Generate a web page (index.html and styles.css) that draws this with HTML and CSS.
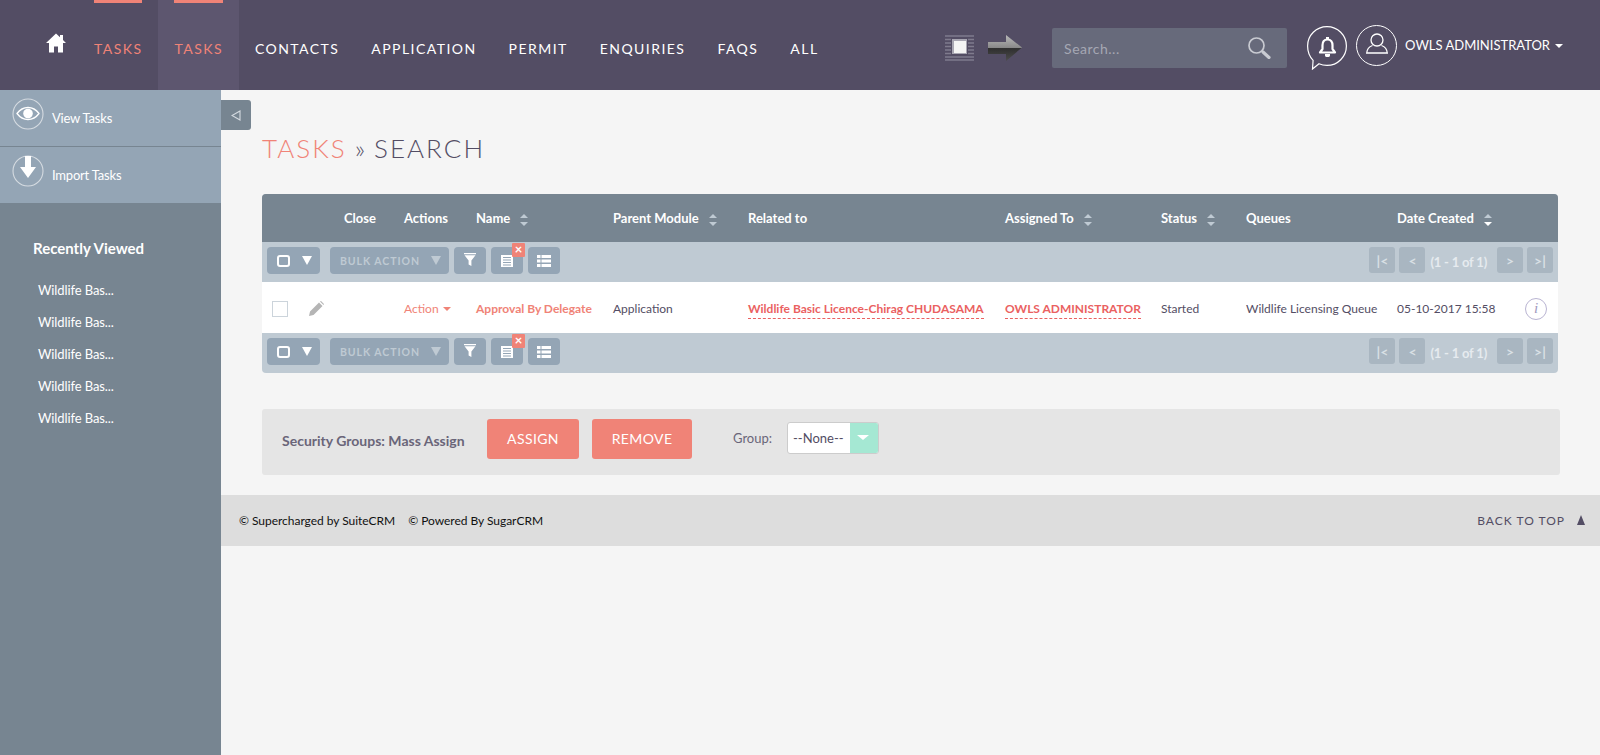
FILE: index.html
```html
<!DOCTYPE html>
<html lang="en">
<head>
<meta charset="utf-8">
<title>Tasks - Search</title>
<link rel="stylesheet" href="styles.css">
</head>
<body>
<header class="navbar">
  <a class="home" href="#"><svg width="20" height="20" viewBox="0 0 20 20"><path fill="#fff" d="M10 .5 0 10h3v9.500h5v-6h4v6h5V10h3l-3-2.900V2h-3v2.200z"/></svg></a>
  <nav class="tabs">
    <a class="tab tab-current" href="#"><span class="tab-bar"></span>TASKS</a>
    <a class="tab tab-current tab-active" href="#"><span class="tab-bar"></span>TASKS</a>
    <a class="tab" href="#">CONTACTS</a>
    <a class="tab" href="#">APPLICATION</a>
    <a class="tab" href="#">PERMIT</a>
    <a class="tab" href="#">ENQUIRIES</a>
    <a class="tab" href="#">FAQS</a>
    <a class="tab" href="#">ALL</a>
  </nav>
  <div class="nav-right">
    <svg class="stripes" width="29" height="26" viewBox="0 0 29 26">
      <path stroke="#7f7b8d" stroke-width="1.600" fill="none" d="M0 1h29M0 25h29M0 4.500h6M23 4.500h6M0 8h6M23 8h6M0 11.500h6M23 11.500h6M0 15h6M23 15h6M0 18.500h6M23 18.500h6M0 22h29"/>
      <rect x="7" y="4" width="15" height="15" fill="#a9a7b3"/>
      <rect x="9" y="6" width="12" height="12" fill="#f4f4f4"/>
    </svg>
    <svg class="arrow" width="34" height="26" viewBox="0 0 34 26">
      <defs>
        <linearGradient id="ag" x1="0" y1="0" x2="0" y2="1"><stop offset="0" stop-color="#b9b9b9"/><stop offset=".48" stop-color="#8a8a8a"/><stop offset=".52" stop-color="#2f2f2f"/><stop offset="1" stop-color="#4d4d4d"/></linearGradient>
      </defs>
      <path fill="url(#ag)" d="M0 7h18V0l16 12.500L18 26v-7H0z"/>
    </svg>
    <form class="search"><span class="search-ph">Search...</span>
      <svg width="23" height="22" viewBox="0 0 23 22"><circle cx="8.500" cy="8.500" r="7.500" fill="none" stroke="#c9cbd2" stroke-width="1.700"/><path d="m15 15 6 5.500" stroke="#c9cbd2" stroke-width="3.200" stroke-linecap="round"/></svg>
    </form>
    <svg class="bell" width="40" height="44" viewBox="0 0 40 44"><path fill="none" stroke="#fff" stroke-width="1.200" d="M20 .6c10.700 0 19.400 8.700 19.400 19.400S30.700 39.400 20 39.400c-2.900 0-5.600-.6-8-1.700L5.500 43l.6-8.700C2.600 30.700.6 25.600.6 20 .6 9.300 9.300.6 20 .6z"/><path fill="none" stroke="#fff" stroke-width="2.200" stroke-linejoin="round" d="M20.500 13.500c-3.500 0-5 2.600-5 5.800v3.700L13 26.500h15L25.500 23v-3.700c0-3.200-1.500-5.800-5-5.800z"/><path fill="#fff" d="M18 28h5v1.500c0 1-1.100 1.500-2.500 1.500s-2.500-.5-2.500-1.500zM19 11h3v2.500h-3z"/></svg>
    <svg class="avatar" width="41" height="41" viewBox="0 0 41 41"><circle cx="20.500" cy="20.500" r="20" fill="none" stroke="#fff" stroke-width="1"/><circle cx="21" cy="15" r="6" fill="none" stroke="#fff" stroke-width="1.300"/><path fill="none" stroke="#fff" stroke-width="1.300" d="M16.500 20.500c-3 1-5.500 4-5.800 7.500h20.600c-.3-3.500-2.800-6.500-5.800-7.500"/></svg>
    <a class="user" href="#">OWLS ADMINISTRATOR<span class="caret caret-white"></span></a>
  </div>
</header>

<div class="layout">
  <aside class="sidebar">
    <a class="side-action" href="#">
      <svg width="32" height="32" viewBox="0 0 32 32"><circle cx="16" cy="16" r="15" fill="none" stroke="#d5dbe1" stroke-width="1.100"/><path fill="none" stroke="#fff" stroke-width="1.300" d="M5 15.500C8 11.500 12 9.500 16 9.500s8 2 11 6c-3 4-7 6-11 6s-8-2-11-6z"/><circle cx="16" cy="15.500" r="4.800" fill="#fff"/></svg>
      <span>View Tasks</span>
    </a>
    <a class="side-action side-action-last" href="#">
      <svg width="32" height="32" viewBox="0 0 32 32"><circle cx="16" cy="16" r="15" fill="none" stroke="#d5dbe1" stroke-width="1.100"/><path fill="#fff" d="M13 1h6v11h5l-8 11-8-11h5z"/></svg>
      <span>Import Tasks</span>
    </a>
    <h3 class="recent-title">Recently Viewed</h3>
    <ul class="recent">
      <li>Wildlife Bas...</li>
      <li>Wildlife Bas...</li>
      <li>Wildlife Bas...</li>
      <li>Wildlife Bas...</li>
      <li>Wildlife Bas...</li>
    </ul>
    <button class="collapse" type="button"><svg width="10" height="11" viewBox="0 0 10 11"><path fill="none" stroke="#d5dbe1" stroke-width="1.100" d="M9 1v9L1 5.500z"/></svg></button>
  </aside>

  <main class="content">
    <h2 class="page-title"><span class="pt-module">TASKS</span> <span class="pt-sep">»</span> SEARCH</h2>

    <section class="list">
      <div class="row head">
        <div></div>
        <div>Close</div>
        <div>Actions</div>
        <div>Name<span class="sort"></span></div>
        <div>Parent Module<span class="sort"></span></div>
        <div>Related to</div>
        <div>Assigned To<span class="sort"></span></div>
        <div>Status<span class="sort"></span></div>
        <div>Queues</div>
        <div>Date Created<span class="sort sort-desc"></span></div>
        <div></div>
      </div>

      <div class="toolbar">
        <div class="tb-left">
          <span class="tbtn tbtn-check"><span class="check-o"></span><span class="tri"></span></span>
          <span class="tbtn tbtn-bulk">BULK ACTION<span class="tri tri-dim"></span></span>
          <span class="tbtn tbtn-icon"><svg class="ic-filter" width="12" height="13" viewBox="0 0 12 13"><path fill="#fff" d="M0 0h12v1.200H0zM.5 2.200h11L7.400 7.500V13L4.600 11.500v-4z"/></svg></span>
          <span class="tbtn tbtn-icon tbtn-x"><svg class="ic-doc" width="12" height="12" viewBox="0 0 12 12"><path fill="#fff" d="M0 0h12v12H0z"/><path stroke="#94a5b5" fill="none" d="M2 2.500h8M2 5h8M2 7.500h8M2 10h8"/></svg><span class="x-badge">×</span></span>
          <span class="tbtn tbtn-icon"><svg width="14" height="12" viewBox="0 0 14 12"><path fill="#fff" d="M0 0h3.500v3H0zM4.500 0H14v3H4.500zM0 4.500h3.500v3H0zM4.500 4.500H14v3H4.500zM0 9h3.500v3H0zM4.500 9H14v3H4.500z"/></svg></span>
        </div>
        <div class="pager">
          <span class="pbtn">|&lt;</span><span class="pbtn">&lt;</span>
          <span class="pcount">(1 - 1 of 1)</span>
          <span class="pbtn">&gt;</span><span class="pbtn">&gt;|</span>
        </div>
      </div>

      <div class="row item">
        <div class="cell-tools"><span class="cbox"></span><svg width="16" height="16" viewBox="0 0 16 16"><path fill="#b5b5b5" d="M11 1.500 14.500 5 5.500 14 1 15l1-4.500zM12 .5l1-.5 3 3-.5 1z"/></svg></div>
        <div></div>
        <div class="red">Action<span class="caret caret-red"></span></div>
        <div class="red bold">Approval By Delegate</div>
        <div>Application</div>
        <div><a class="dash" href="#">Wildlife Basic Licence-Chirag CHUDASAMA</a></div>
        <div><a class="dash" href="#">OWLS ADMINISTRATOR</a></div>
        <div>Started</div>
        <div>Wildlife Licensing Queue</div>
        <div>05-10-2017 15:58</div>
        <div class="cell-info"><span class="info">i</span></div>
      </div>

      <div class="toolbar">
        <div class="tb-left">
          <span class="tbtn tbtn-check"><span class="check-o"></span><span class="tri"></span></span>
          <span class="tbtn tbtn-bulk">BULK ACTION<span class="tri tri-dim"></span></span>
          <span class="tbtn tbtn-icon"><svg class="ic-filter" width="12" height="13" viewBox="0 0 12 13"><path fill="#fff" d="M0 0h12v1.200H0zM.5 2.200h11L7.400 7.500V13L4.600 11.500v-4z"/></svg></span>
          <span class="tbtn tbtn-icon tbtn-x"><svg class="ic-doc" width="12" height="12" viewBox="0 0 12 12"><path fill="#fff" d="M0 0h12v12H0z"/><path stroke="#94a5b5" fill="none" d="M2 2.500h8M2 5h8M2 7.500h8M2 10h8"/></svg><span class="x-badge">×</span></span>
          <span class="tbtn tbtn-icon"><svg width="14" height="12" viewBox="0 0 14 12"><path fill="#fff" d="M0 0h3.500v3H0zM4.500 0H14v3H4.500zM0 4.500h3.500v3H0zM4.500 4.500H14v3H4.500zM0 9h3.500v3H0zM4.500 9H14v3H4.500z"/></svg></span>
        </div>
        <div class="pager">
          <span class="pbtn">|&lt;</span><span class="pbtn">&lt;</span>
          <span class="pcount">(1 - 1 of 1)</span>
          <span class="pbtn">&gt;</span><span class="pbtn">&gt;|</span>
        </div>
      </div>
    </section>

    <section class="mass">
      <strong class="mass-label">Security Groups: Mass Assign</strong>
      <button class="btn btn-assign" type="button">ASSIGN</button>
      <button class="btn btn-remove" type="button">REMOVE</button>
      <span class="group-label">Group:</span>
      <span class="select"><span class="select-val">--None--</span><span class="select-arrow"></span></span>
    </section>

    <footer class="footer">
      <div class="foot-left"><span>© Supercharged by SuiteCRM</span><span>© Powered By SugarCRM</span></div>
      <a class="totop" href="#">BACK TO TOP<span class="totop-tri"></span></a>
    </footer>
  </main>
</div>
</body>
</html>
```

FILE: styles.css
```css
* { box-sizing: border-box; }
html, body { margin: 0; height: 100%; }
body { font-family: Lato, "Open Sans", sans-serif; font-size: 12px; color: #534d64; background: #f5f5f5; height: 755px; overflow: hidden; }
a { color: inherit; text-decoration: none; }

.navbar { height: 90px; background: #534d64; display: flex; align-items: stretch; color: #fff; }
.home { width: 94px; padding: 33px 0 0 46px; flex: none; display: block; }
.tabs { display: flex; }
.tab { position: relative; display: flex; align-items: center; height: 90px; padding: 6px 16px 0; font-size: 14px; letter-spacing: 1.45px; color: #fff; }
.tab:first-child { padding-left: 0; padding-right: 16px; }
.tab-current { color: #f08377; }
.tab-active { background: #5d566f; padding: 6px 16px 0; }
.tab-bar { position: absolute; top: 0; height: 3px; background: #f08377; left: 16px; right: 16px; }
.tab:first-child .tab-bar { left: 0; right: 16px; }
.nav-right { margin-left: auto; display: flex; align-items: center; padding-right: 37px; }
.stripes { margin: 6px 14px 0 0; }
.arrow { margin: 6px 30px 0 0; }
.search { width: 235px; height: 40px; margin-top: 6px; background: #676a7b; border-radius: 2px; display: flex; align-items: center; justify-content: space-between; padding: 0 16px 0 12px; color: #a5a7b3; font-size: 14px; letter-spacing: .5px; }
.search-ph { display: block; }
.bell { margin: 6px 9px 0 20px; }
.avatar { margin: 0 8px 0 0; }
.user { font-size: 13px; letter-spacing: 0; white-space: nowrap; }
.caret { display: inline-block; width: 0; height: 0; border: 4px solid transparent; border-bottom: 0; margin-left: 5px; vertical-align: 2px; }
.caret-white { border-top-color: #fff; }
.caret-red { border-top-color: #f08377; }

.layout { display: flex; height: 665px; }
.sidebar { position: relative; width: 221px; flex: none; background: #778591; color: #fff; }
.side-action { height: 57px; background: #94a5b5; border-bottom: 1px solid #778591; display: flex; align-items: flex-start; gap: 8px; padding: 8px 0 0 12px; font-size: 13px; letter-spacing: -.2px; }
.side-action span { margin-top: 12px; }
.side-action-last { height: 56px; border-bottom: 0; }
.recent-title { margin: 0; padding: 36px 0 0 33px; font-size: 15px; font-weight: 700; line-height: 18px; }
.recent { list-style: none; margin: 17px 0 0; padding: 0 0 0 38px; font-size: 13px; letter-spacing: -.1px; }
.recent li { height: 32px; line-height: 32px; }
.collapse { position: absolute; top: 10px; left: 221px; width: 30px; height: 30px; padding: 0; border: 0; background: #778591; border-radius: 0 3px 3px 0; display: flex; align-items: center; justify-content: center; }

.content { flex: 1; min-width: 0; }
.page-title { margin: 0; padding: 42px 0 0 41px; height: 104px; font-size: 26px; line-height: 32px; font-weight: 300; letter-spacing: 2px; color: #534d64; }
.pt-module { color: #f08377; }
.pt-sep { font-size: 26px; letter-spacing: 0; margin: 0 0 0 -1px; }

.list { margin-left: 41px; width: 1296px; background: #bfcad3; border-radius: 4px; overflow: hidden; }
.row { display: grid; grid-template-columns: 82px 60px 72px 137px 135px 257px 156px 85px 151px 125px 36px; align-items: center; }
.head { height: 48px; background: #778591; color: #fff; font-size: 13px; font-weight: 700; }
.sort { display: inline-block; width: 8px; height: 10px; margin-left: 10px; vertical-align: -2px; position: relative; }
.sort::before, .sort::after { content: ""; position: absolute; left: 0; border: 4px solid transparent; }
.sort::before { top: -1px; border-top: 0; border-bottom-color: #bfcad3; }
.sort::after { bottom: -1px; border-bottom: 0; border-top-color: #bfcad3; }
.sort-desc::after { border-top-color: #fff; }
.toolbar { height: 40px; display: flex; justify-content: space-between; align-items: flex-start; padding: 5px 5px 0; }
.tb-left { display: flex; align-items: center; }
.tbtn { height: 27px; background: #94a5b5; border-radius: 4px; display: flex; align-items: center; justify-content: center; position: relative; color: #fff; }
.tbtn-check { width: 53px; gap: 12px; margin-right: 10px; padding-left: 1px; }
.check-o { width: 13px; height: 12px; border: 2.500px solid #fff; border-radius: 3px; }
.tri { width: 0; height: 0; border: 5px solid transparent; border-bottom: 0; border-top: 9px solid #fff; }
.tbtn-bulk { width: 119px; font-size: 10.500px; font-weight: 700; letter-spacing: .95px; color: #bfcad3; gap: 11px; margin-right: 5px; padding-left: 2px; }
.tri-dim { border-top-color: #bfcad3; }
.tbtn-icon { width: 32px; margin-right: 5px; }
.ic-filter { margin-top: -3px; }
.ic-doc { margin-right: 1px; }
.x-badge { position: absolute; top: -4px; right: -2px; width: 13px; height: 14px; background: #f08377; border-radius: 1px; font-size: 13px; font-weight: 700; line-height: 13px; text-align: center; color: #fff; }
.pager { display: flex; align-items: center; gap: 4px; color: #e6ebef; font-size: 13px; font-weight: 700; }
.pbtn { width: 26px; height: 26px; background: #a9b6c1; border-radius: 3px; display: flex; align-items: center; justify-content: center; color: #d9e0e5; font-size: 14px; font-weight: 700; }
.pcount { margin: 3px 6px 0 1px; letter-spacing: -.2px; }

.item { height: 51px; padding-top: 2px; background: #fff; color: #534d64; font-size: 12px; }
.cell-tools { display: flex; align-items: center; gap: 20px; padding-left: 10px; }
.cbox { width: 16px; height: 16px; border: 1px solid #ccd4db; flex: none; }
.red { color: #f08377; }
.bold { font-weight: 700; }
.item .caret { margin-left: 4px; }
.dash { color: #ea6161; font-weight: 700; border-bottom: 1px dashed #ea6161; padding-bottom: 2px; white-space: nowrap; }
.cell-info { padding-left: 3px; }
.info { display: block; width: 22px; height: 22px; border: 1.500px solid #b9b4d2; border-radius: 50%; font: italic 15px/19px "Liberation Serif", serif; text-align: center; color: #a09ac0; }

.mass { margin: 36px 0 0 41px; width: 1298px; height: 66px; background: #e5e5e5; border-radius: 3px; display: flex; align-items: center; padding-left: 20px; }
.mass-label { font-size: 14px; font-weight: 700; color: #6a6579; margin-top: -4px; width: 205px; white-space: nowrap; }
.btn { height: 40px; border: 0; border-radius: 3px; background: #f08377; color: #fff; font: 14px Lato, sans-serif; letter-spacing: .4px; margin-top: -6px; padding: 0 0 2px; }
.btn-assign { width: 92px; margin-right: 13px; }
.btn-remove { width: 100px; margin-right: 41px; }
.group-label { font-size: 13px; color: #6a6579; margin: -8px 15px 0 0; }
.select { display: flex; width: 92px; height: 32px; margin-top: -8px; border: 1px solid #ccc; border-radius: 3px; background: #fff; font-size: 13px; color: #534d64; overflow: hidden; }
.select-val { flex: 1; line-height: 30px; padding-left: 5px; }
.select-arrow { width: 28px; background: #a5e8d3; position: relative; }
.select-arrow::after { content: ""; position: absolute; left: 7px; top: 12px; border: 6px solid transparent; border-bottom: 0; border-top: 5px solid #fff; }

.footer { margin-top: 20px; height: 51px; background: #ddd; display: flex; justify-content: space-between; align-items: center; padding: 0 15px 0 18px; font-size: 12px; color: #111; }
.foot-left { display: flex; gap: 13px; letter-spacing: -.03px; }
.totop { font-size: 12px; letter-spacing: 1px; color: #534d64; display: flex; gap: 12px; align-items: center; }
.totop-tri { width: 0; height: 0; border: 4.500px solid transparent; border-top: 0; border-bottom: 10px solid #534d64; margin-top: -1px; }
```
